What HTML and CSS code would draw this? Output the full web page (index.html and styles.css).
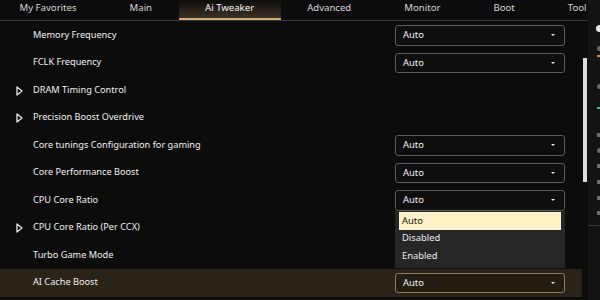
FILE: index.html
```html
<!DOCTYPE html>
<html>
<head>
<meta charset="utf-8">
<link rel="stylesheet" href="styles.css">
</head>
<body>
<div class="app">
  <div class="main">
    <div class="tabs">
      <div class="tab">My Favorites</div>
      <div class="tab">Main</div>
      <div class="tab active">Ai Tweaker</div>
      <div class="tab">Advanced</div>
      <div class="tab">Monitor</div>
      <div class="tab">Boot</div>
      <div class="tab">Tool</div>
    </div>
    <div class="body">
      <div class="list">
        <div class="row"><span class="icon"></span><span class="label">Memory Frequency</span><div class="select"><span>Auto</span><i class="caret"></i></div></div>
        <div class="row"><span class="icon"></span><span class="label">FCLK Frequency</span><div class="select"><span>Auto</span><i class="caret"></i></div></div>
        <div class="row"><span class="icon"><svg width="7" height="10" viewBox="0 0 7 10"><path d="M1 1 L6 5 L1 9 Z" fill="none" stroke="#e8e8e8" stroke-width="1.3" stroke-linejoin="round"/></svg></span><span class="label">DRAM Timing Control</span></div>
        <div class="row"><span class="icon"><svg width="7" height="10" viewBox="0 0 7 10"><path d="M1 1 L6 5 L1 9 Z" fill="none" stroke="#e8e8e8" stroke-width="1.3" stroke-linejoin="round"/></svg></span><span class="label">Precision Boost Overdrive</span></div>
        <div class="row"><span class="icon"></span><span class="label">Core tunings Configuration for gaming</span><div class="select"><span>Auto</span><i class="caret"></i></div></div>
        <div class="row"><span class="icon"></span><span class="label">Core Performance Boost</span><div class="select"><span>Auto</span><i class="caret"></i></div></div>
        <div class="row"><span class="icon"></span><span class="label">CPU Core Ratio</span>
          <div class="select open"><span>Auto</span><i class="caret"></i>
            <div class="menu">
              <div class="opt sel">Auto</div>
              <div class="opt">Disabled</div>
              <div class="opt">Enabled</div>
            </div>
          </div>
        </div>
        <div class="row"><span class="icon"><svg width="7" height="10" viewBox="0 0 7 10"><path d="M1 1 L6 5 L1 9 Z" fill="none" stroke="#e8e8e8" stroke-width="1.3" stroke-linejoin="round"/></svg></span><span class="label">CPU Core Ratio (Per CCX)</span></div>
        <div class="row"><span class="icon"></span><span class="label">Turbo Game Mode</span></div>
        <div class="row hl"><span class="icon"></span><span class="label">AI Cache Boost</span><div class="select hlsel"><span>Auto</span><i class="caret"></i></div></div>
        <div class="row next"><span class="icon"></span><span class="label"></span><div class="select"><span></span></div></div>
      </div>
      <div class="track"><div class="thumb"></div></div>
    </div>
  </div>
  <div class="side">
    <i class="dot white" style="margin-top:25px"></i>
    <i class="dot" style="margin-top:14px"></i>
    <i class="dash orange" style="margin-top:4px"></i>
    <i class="dot" style="margin-top:27px"></i>
    <i class="dash teal" style="margin-top:18px"></i>
    <i class="sq" style="margin-top:24px"></i>
    <i class="dot" style="margin-top:11px"></i>
    <i class="sq" style="margin-top:11px"></i>
    <i class="sq" style="margin-top:12px"></i>
    <i class="sq" style="margin-top:12px"></i>
    <i class="sq" style="margin-top:11px"></i>
    <i class="line" style="margin-top:10px"></i>
  </div>
</div>
</body>
</html>
```
FILE: styles.css
```css
* { box-sizing: border-box; }
html, body { margin: 0; padding: 0; }
body {
  width: 600px;
  height: 300px;
  overflow: hidden;
  background: #0c0c0c;
  font-family: "Noto Sans", "Open Sans", sans-serif;
  font-size: 9.2px;
  color: #f0f0f0;
}
.app { display: flex; height: 300px; }
.main { width: 588px; flex: none; display: flex; flex-direction: column; overflow: hidden; }
.tabs {
  height: 21px;
  display: flex;
  margin-left: -7px;
  border-bottom: 1px solid #3a3a3a;
  white-space: nowrap;
  flex: none;
}
.tab {
  padding: 0 26.5px;
  line-height: 16px;
  height: 20px;
  font-size: 9.6px;
  color: #d6d6d6;
  flex: none;
}
.tab.active {
  color: #f6f6f6;
  background: linear-gradient(#0d0d0d, #3a3123);
  border-bottom: 2px solid #d2ab7c;
}
.body { display: flex; flex: 1; min-height: 0; }
.list { width: 582px; flex: none; padding-top: 0.5px; }
.track { width: 6px; flex: none; padding-left: 1px; padding-top: 37px; }
.thumb { width: 4px; height: 124px; background: #dcdcdc; }
.row {
  height: 27.5px;
  display: flex;
  align-items: center;
  position: relative;
}
.row.hl { background: #2a2317; }
.row.next { align-items: flex-start; padding-top: 3px; }
.icon { width: 33px; flex: none; display: flex; justify-content: flex-end; padding-right: 10px; padding-top: 1px; }
.label { flex: 1; padding-bottom: 2px; }
.select {
  position: relative;
  width: 170px;
  height: 20.5px;
  margin-right: 17px;
  border: 1px solid #5c5c5c;
  border-radius: 3px;
  background: #0e0e0e;
  display: flex;
  align-items: center;
  padding-left: 7px;
  font-size: 9.4px;
  color: #f2f2f2;
}
.select span { flex: 1; padding-bottom: 1px; }
.hlsel { border-color: #8c7b5c; background: #221c12; }
.caret {
  width: 0; height: 0;
  border-left: 2.5px solid transparent;
  border-right: 2.5px solid transparent;
  border-top: 2.5px solid #f0f0f0;
  margin-right: 9px;
}
.menu {
  position: absolute;
  left: -1px;
  top: 20px;
  width: 170px;
  height: 57px;
  background: #262626;
  padding: 1px 4px 0 4px;
  z-index: 2;
}
.opt {
  height: 18px;
  line-height: 16px;
  padding-left: 3px;
  color: #ececec;
}
.opt.sel {
  background: #fdf2c6;
  color: #111;
  border: 1px solid #f6f0dc;
  line-height: 15px;
  padding-left: 2px;
}
.side {
  width: 12px;
  flex: none;
  background: #131313;
  display: flex;
  flex-direction: column;
  align-items: flex-end;
}
.side i { display: block; flex: none; }
.dot { width: 5px; height: 5px; border-radius: 50%; background: #6a6a6a; margin-right: -2px; }
.dot.white { width: 7px; height: 7px; background: #e8e8e8; margin-right: -3px; }
.dash { width: 3px; height: 2px; margin-right: 0; }
.orange { background: #d9894a; }
.teal { background: #38b7a5; }
.sq { width: 3px; height: 4px; background: #6e6e6e; }
.line { width: 12px; height: 1px; background: #3a3a3a; }
```
